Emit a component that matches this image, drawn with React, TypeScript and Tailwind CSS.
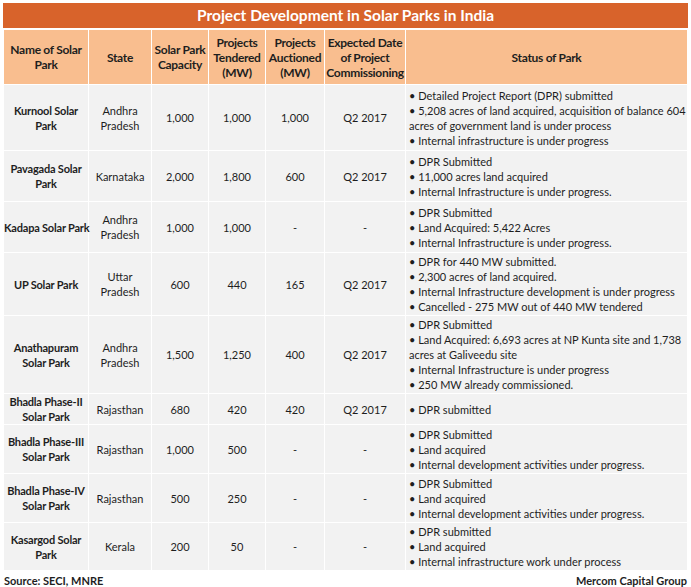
import React from "react";

const rows = [
  {
    name: ["Kurnool Solar", "Park"],
    state: ["Andhra", "Pradesh"],
    cap: "1,000",
    tend: "1,000",
    auct: "1,000",
    date: "Q2 2017",
    status: [
      "• Detailed Project Report (DPR) submitted",
      "• 5,208 acres of land acquired, acquisition of balance 604",
      "acres of government land is under process",
      "• Internal infrastructure is under progress",
    ],
    h: "h-[66px]",
  },
  {
    name: ["Pavagada Solar", "Park"],
    state: ["Karnataka"],
    cap: "2,000",
    tend: "1,800",
    auct: "600",
    date: "Q2 2017",
    status: ["• DPR Submitted", "• 11,000 acres land acquired", "• Internal Infrastructure is under progress."],
    h: "h-[51px]",
  },
  {
    name: ["Kadapa Solar Park"],
    state: ["Andhra", "Pradesh"],
    cap: "1,000",
    tend: "1,000",
    auct: "-",
    date: "-",
    status: ["• DPR Submitted", "• Land Acquired: 5,422 Acres", "• Internal Infrastructure is under progress."],
    h: "h-[51px]",
  },
  {
    name: ["UP Solar Park"],
    state: ["Uttar", "Pradesh"],
    cap: "600",
    tend: "440",
    auct: "165",
    date: "Q2 2017",
    status: [
      "• DPR for 440 MW submitted.",
      "• 2,300 acres of land acquired.",
      "• Internal Infrastructure development is under progress",
      "• Cancelled - 275 MW out of 440 MW tendered",
    ],
    h: "h-[63px]",
  },
  {
    name: ["Anathapuram", "Solar Park"],
    state: ["Andhra", "Pradesh"],
    cap: "1,500",
    tend: "1,250",
    auct: "400",
    date: "Q2 2017",
    status: [
      "• DPR Submitted",
      "• Land Acquired: 6,693 acres at NP Kunta site and 1,738",
      "acres at Galiveedu site",
      "• Internal Infrastructure is under progress",
      "• 250 MW already commissioned.",
    ],
    h: "h-[78px]",
  },
  {
    name: ["Bhadla Phase-II", "Solar Park"],
    state: ["Rajasthan"],
    cap: "680",
    tend: "420",
    auct: "420",
    date: "Q2 2017",
    status: ["• DPR submitted"],
    h: "h-[31px]",
  },
  {
    name: ["Bhadla Phase-III", "Solar Park"],
    state: ["Rajasthan"],
    cap: "1,000",
    tend: "500",
    auct: "-",
    date: "-",
    status: ["• DPR Submitted", "• Land acquired", "• Internal development activities under progress."],
    h: "h-[49px]",
  },
  {
    name: ["Bhadla Phase-IV", "Solar Park"],
    state: ["Rajasthan"],
    cap: "500",
    tend: "250",
    auct: "-",
    date: "-",
    status: ["• DPR Submitted", "• Land acquired", "• Internal development activities under progress."],
    h: "h-[49px]",
  },
  {
    name: ["Kasargod Solar", "Park"],
    state: ["Kerala"],
    cap: "200",
    tend: "50",
    auct: "-",
    date: "-",
    status: ["• DPR submitted", "• Land acquired", "• Internal infrastructure work under process"],
    h: "h-[48px]",
  },
];

function Lines({ items }: { items: string[] }) {
  return (
    <>
      {items.map((t, i) => (
        <div key={i} className="whitespace-nowrap">
          {t}
        </div>
      ))}
    </>
  );
}

export default function App() {
  const th =
    "border border-white p-0 font-bold text-center align-middle text-[12px] leading-[15px] whitespace-nowrap tracking-[-0.3px]";
  const td = "border border-white p-0 text-center align-middle";
  return (
    <div
      className="w-[691px] h-[587px] bg-white text-[#1e1e1e] pt-[3px] px-[3px]"
      style={{ fontFamily: "Lato, 'Open Sans', sans-serif" }}
    >
      <div className="h-[25px] bg-[#d8632b] flex items-center justify-center text-white font-bold text-[15.5px]">
        Project Development in Solar Parks in India
      </div>
      <table className="w-[685px] border-collapse table-fixed mt-px text-[11px] leading-[15px]">
        <colgroup>
          <col className="w-[85px]" />
          <col className="w-[63px]" />
          <col className="w-[57px]" />
          <col className="w-[57px]" />
          <col className="w-[59px]" />
          <col className="w-[81px]" />
          <col />
        </colgroup>
        <thead>
          <tr className="h-[55px] bg-[#f9be8f]">
            <th className={th}>Name of Solar<br />Park</th>
            <th className={th}>State</th>
            <th className={th}>Solar Park<br />Capacity</th>
            <th className={th}>Projects<br />Tendered<br />(MW)</th>
            <th className={th}>Projects<br />Auctioned<br />(MW)</th>
            <th className={th}>Expected Date<br />of Project<br />Commissioning</th>
            <th className={th}>Status of Park</th>
          </tr>
        </thead>
        <tbody>
          {rows.map((r, i) => (
            <tr key={i} className={r.h + " bg-[#f2f2f2]"}>
              <td className={td + " font-bold tracking-[-0.2px]"}>
                <Lines items={r.name} />
              </td>
              <td className={td}>
                <Lines items={r.state} />
              </td>
              <td className={td}>{r.cap}</td>
              <td className={td}>{r.tend}</td>
              <td className={td}>{r.auct}</td>
              <td className={td}>{r.date}</td>
              <td className="border border-white p-0 align-middle text-left pl-[3px]">
                <Lines items={r.status} />
              </td>
            </tr>
          ))}
        </tbody>
      </table>
      <div className="flex justify-between font-bold text-[11px] leading-[15px] mt-[2px] px-px">
        <span>Source: SECI, MNRE</span>
        <span>Mercom Capital Group</span>
      </div>
    </div>
  );
}
